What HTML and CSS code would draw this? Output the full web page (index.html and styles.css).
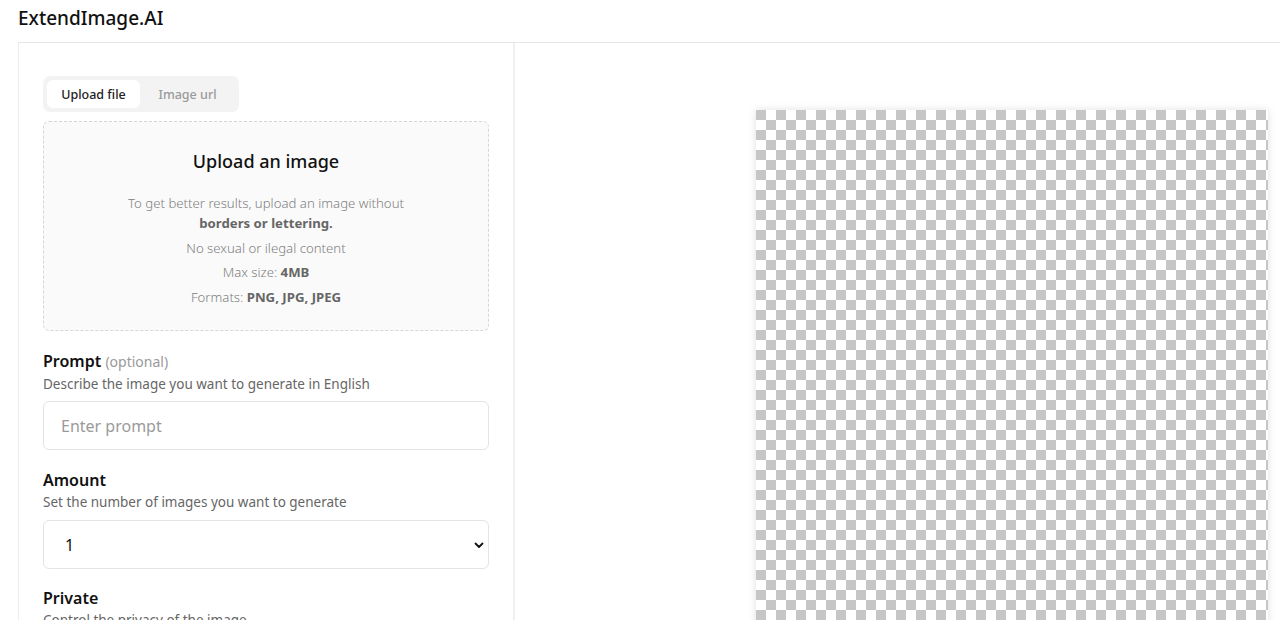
FILE: index.html
```html
<!DOCTYPE html>
<html lang="en">
<head>
  <meta charset="UTF-8">
  <title>ExtendImage.AI</title>
  <link rel="stylesheet" href="styles.css">
</head>
<body>
  <header class="topbar">ExtendImage.AI</header>
  <main class="layout">
    <section class="panel">
      <div class="tabs">
        <button class="tab active">Upload file</button>
        <button class="tab">Image url</button>
      </div>
      <div class="dropzone">
        <h2>Upload an image</h2>
        <p class="hint">To get better results, upload an image without<br><b>borders or lettering.</b></p>
        <p class="hint">No sexual or ilegal content</p>
        <p class="hint">Max size: <b>4MB</b></p>
        <p class="hint">Formats: <b>PNG, JPG, JPEG</b></p>
      </div>

      <div class="field">
        <label class="label">Prompt <span class="opt">(optional)</span></label>
        <div class="desc">Describe the image you want to generate in English</div>
        <input class="control" type="text" placeholder="Enter prompt">
      </div>

      <div class="field">
        <label class="label">Amount</label>
        <div class="desc desc-select">Set the number of images you want to generate</div>
        <div class="select">
          <span>1</span>
          <svg width="12" height="12" viewBox="0 0 12 12"><path d="M2.5 4.5 6 8l3.5-3.5" fill="none" stroke="#111" stroke-width="1.8" stroke-linecap="round" stroke-linejoin="round"/></svg>
        </div>
      </div>

      <div class="field field-last">
        <label class="label">Private</label>
        <div class="desc">Control the privacy of the image</div>
      </div>
    </section>
    <section class="preview">
      <div class="canvas"></div>
    </section>
  </main>
</body>
</html>
```

FILE: styles.css
```css
*{
  box-sizing: border-box;
}
body{
  margin: 0;
  color: #111;
  background: #fff;
  font-family: "Noto Sans", "Open Sans", Arial, sans-serif;
  overflow: hidden;
}
.topbar{
  height: 42px;
  padding: 4px 18px 0;
  font-size: 19px;
  font-weight: 500;
  line-height: 28px;
}
.layout{
  display: flex;
  margin-left: 18px;
  border-top: 1px solid #e6e6e6;
  border-left: 1px solid #ececec;
  height: 600px;
}
.panel{
  width: 496px;
  flex: none;
  padding: 33px 24px 0 24px;
  border-right: 2px solid #f0f0f0;
}
.tabs{
  display: inline-flex;
  padding: 4px;
  background: #f3f3f3;
  border-radius: 7px;
  margin-bottom: 9px;
}
.tab{
  border: 0;
  background: none;
  font: 500 12.5px "Noto Sans", Arial, sans-serif;
  color: #9a9a9a;
  height: 28px;
  width: 95px;
  padding: 0;
  white-space: nowrap;
  border-radius: 6px;
}
.tab.active{
  background: #fff;
  color: #222;
  width: 93px;
}
.dropzone{
  height: 210px;
  border: 1px dashed #d6d6d6;
  border-radius: 6px;
  background: #fafafa;
  text-align: center;
  padding-top: 25px;
}
.dropzone h2{
  margin: 0 0 18px;
  font-size: 18px;
  font-weight: 500;
  line-height: 28px;
}
.hint{
  margin: 0 0 4.6px;
  font-size: 13.2px;
  font-weight: 300;
  line-height: 20px;
  color: #808080;
}
.hint b{
  font-weight: 700;
  color: #666;
}
.field{
  margin-top: 19px;
}
.field-last{
  margin-top: 18px;
}
.label{
  display: block;
  font-size: 16px;
  font-weight: 600;
  line-height: 22px;
}
.opt{
  font-size: 14px;
  font-weight: 400;
  color: #9a9a9a;
}
.desc{
  font-size: 13.5px;
  color: #666;
  line-height: 22px;
  margin-bottom: 6px;
}
.desc-select{
  margin-bottom: 7px;
}
.control, .select{
  display: block;
  width: 100%;
  height: 49px;
  border: 1px solid #e4e4e4;
  border-radius: 6px;
  background: #fff;
  padding: 0 17px;
  font: 16px "Noto Sans", Arial, sans-serif;
  color: #111;
  outline: none;
}
.control::placeholder{
  color: #9a9a9a;
}
.select{
  display: flex;
  align-items: center;
  justify-content: space-between;
  padding: 0 3px 0 21px;
}
.preview{
  flex: 1;
  display: flex;
  justify-content: flex-end;
  align-items: flex-start;
  padding: 67px 12px 0 0;
}
.canvas{
  width: 512px;
  height: 600px;
  flex: none;
  background-color: #fff;
  background-image: conic-gradient(#c6c6c6 25%, transparent 0 50%, #c6c6c6 0 75%, transparent 0);
  background-size: 20px 20px;
  background-position: 10px 0;
  box-shadow: 0 0 8px rgba(0,0,0,0.12);
}
```
